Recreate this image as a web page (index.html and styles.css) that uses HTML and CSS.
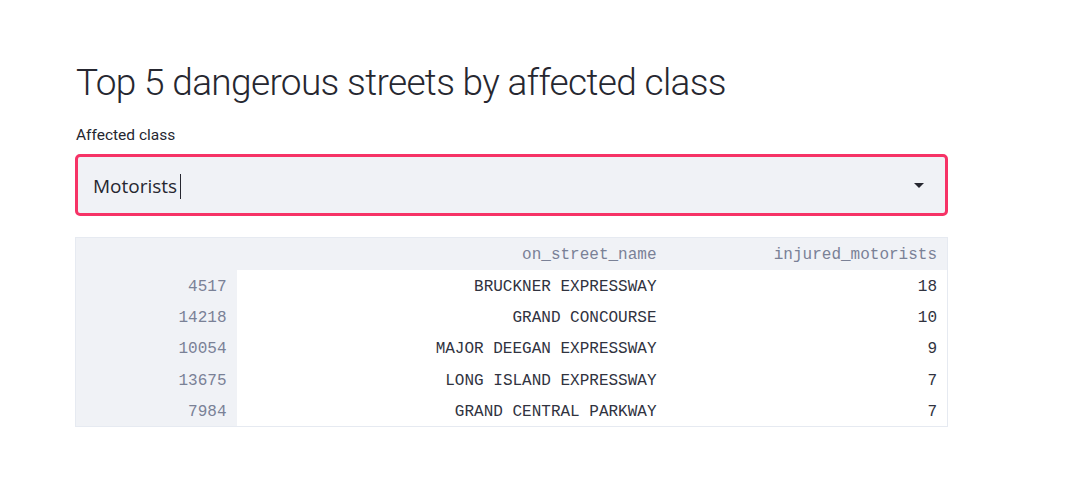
FILE: index.html
```html
<!DOCTYPE html>
<html>
<head>
<meta charset="utf-8">
<link rel="stylesheet" href="styles.css">
</head>
<body>
<main class="page">
  <h1 class="title">Top 5 dangerous streets by affected class</h1>
  <div class="field">
    <label class="label">Affected class</label>
    <div class="select">
      <span class="value">Motorists</span><span class="caret"></span>
      <svg class="arrow" width="12" height="6" viewBox="0 0 12 6"><path d="M1 0h10L6 5z" fill="#262730"/></svg>
    </div>
  </div>
  <table class="df">
    <thead>
      <tr><th class="idx"></th><th class="c1">on_street_name</th><th class="c2">injured_motorists</th></tr>
    </thead>
    <tbody>
      <tr><th class="idx">4517</th><td>BRUCKNER EXPRESSWAY</td><td>18</td></tr>
      <tr><th class="idx">14218</th><td>GRAND CONCOURSE</td><td>10</td></tr>
      <tr><th class="idx">10054</th><td>MAJOR DEEGAN EXPRESSWAY</td><td>9</td></tr>
      <tr><th class="idx">13675</th><td>LONG ISLAND EXPRESSWAY</td><td>7</td></tr>
      <tr><th class="idx">7984</th><td>GRAND CENTRAL PARKWAY</td><td>7</td></tr>
    </tbody>
  </table>
</main>
</body>
</html>
```

FILE: styles.css
```css
html, body { margin: 0; padding: 0; background: #fff; }
body { font-family: "Open Sans", sans-serif; color: #262730; }
.page { padding: 60px 0 0 76px; width: 872px; }
.title {
  margin: 0;
  font-family: Roboto, sans-serif;
  font-weight: 300;
  font-size: 37px;
  line-height: 46px;
  letter-spacing: -0.65px;
  color: #262730;
}
.field { margin-top: 20px; }
.label { display: block; font-family: Roboto, sans-serif; font-size: 15.5px; line-height: 18px; color: #262730; }
.select {
  margin: 10px 0 0 -1px;
  height: 62px;
  box-sizing: border-box;
  border: 3px solid #f63366;
  border-radius: 5px;
  background: #f0f2f6;
  display: flex;
  align-items: center;
  padding: 2px 20px 0 15px;
}
.value { font-size: 19px; color: #262730; }
.caret { width: 1px; height: 25px; background: #262730; margin-left: 3px; }
.arrow { margin-left: auto; }
.df {
  margin-top: 21px;
  margin-left: -1px;
  border-collapse: collapse;
  border: 1px solid #e6eaf1;
  font-family: "Liberation Mono", monospace;
  font-size: 16px;
  width: 873px;
}
.df th, .df td {
  box-sizing: border-box;
  padding: 3px 10px 0;
  height: 31.4px;
  text-align: right;
  font-weight: 400;
  white-space: nowrap;
}
.df thead th { background: #f0f2f6; color: #7a8196; height: 32px; }
.df tbody th { background: #f0f2f6; color: #7a8196; }
.df td { color: #31333f; background: #fff; }
.df .idx { width: 161px; }
.df .c1 { width: 430px; }
```
